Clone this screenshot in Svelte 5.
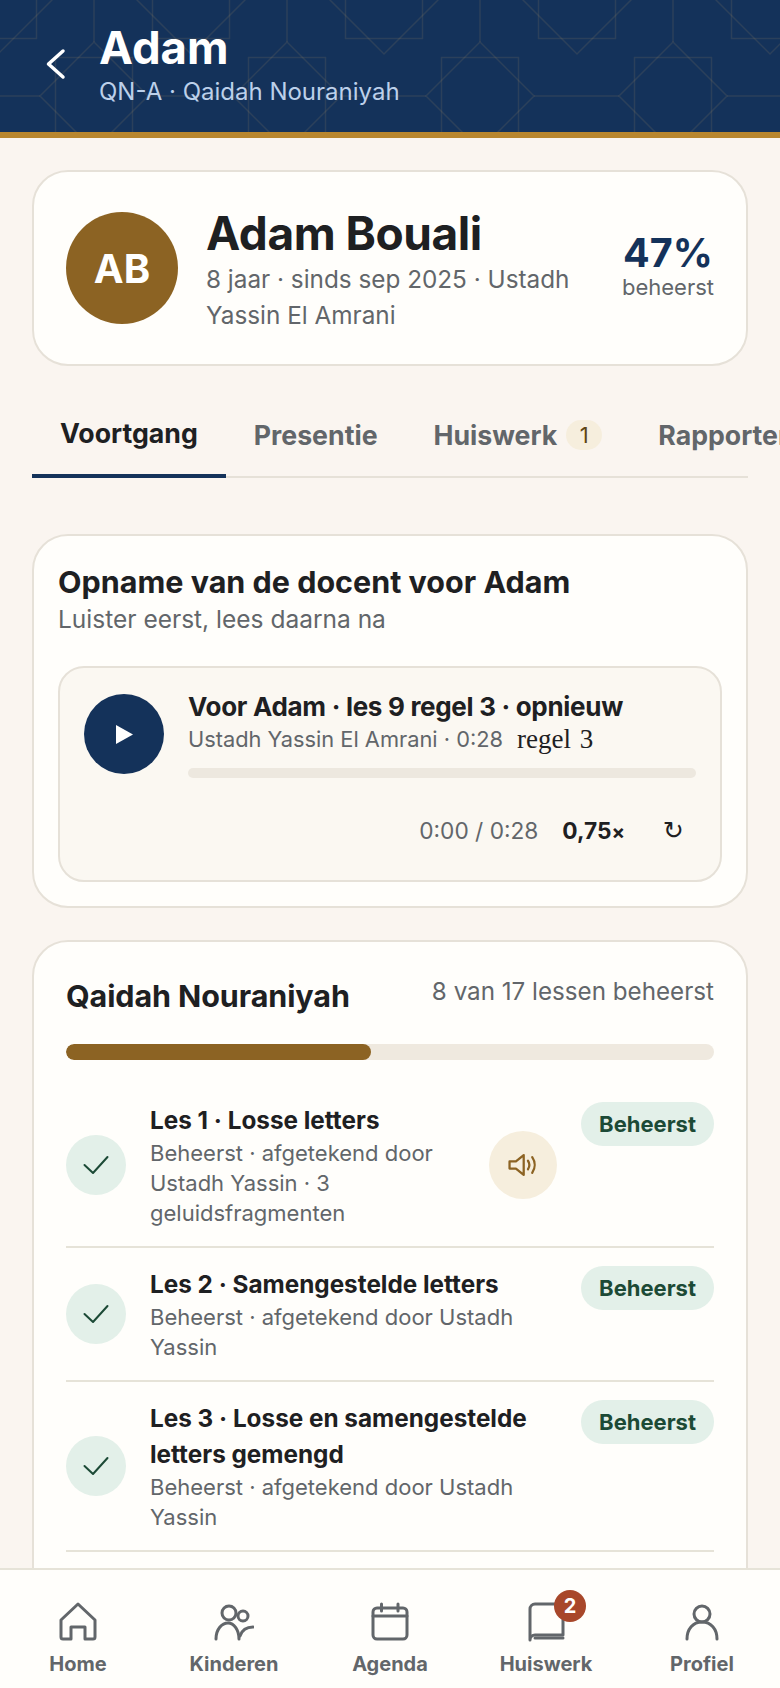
<script lang="ts">
	const tabs = [
		{ label: 'Voortgang', active: true },
		{ label: 'Presentie' },
		{ label: 'Huiswerk', count: 1 },
		{ label: 'Rapporten' }
	];

	const lessons = [
		{
			title: 'Les 1 · Losse letters',
			sub: 'Beheerst · afgetekend door Ustadh Yassin · 3 geluidsfragmenten',
			audio: true
		},
		{ title: 'Les 2 · Samengestelde letters', sub: 'Beheerst · afgetekend door Ustadh Yassin' },
		{
			title: 'Les 3 · Losse en samengestelde letters gemengd',
			sub: 'Beheerst · afgetekend door Ustadh Yassin'
		}
	];

	const navItems = ['Home', 'Kinderen', 'Agenda', 'Huiswerk', 'Profiel'];

	// header ornament: staggered rows, 193px apart
	const upperRow = [-2, 191, 384, 577, 770];
	const lowerRow = [94, 287, 480, 673];
</script>

<div class="screen">
	<header class="topbar">
		<svg class="pattern" width="780" height="132" aria-hidden="true">
			{#each upperRow as x}
				<rect x={x - 38.5} y="-38.500" width="77" height="77" />
				<path d="M{x} -54L{x + 54} 0L{x} 54L{x - 54} 0Z" />
			{/each}
			{#each lowerRow as x}
				<rect x={x - 38.5} y="57.500" width="77" height="77" />
				<path d="M{x} 42L{x + 54} 96L{x} 150L{x - 54} 96Z" />
				<path d="M{x} 0V42M{x + 54} 96H{x + 139}" />
			{/each}
			<path d="M0 96H40" />
		</svg>
		<svg class="back" width="22" height="32" viewBox="0 0 22 32" aria-hidden="true">
			<path d="M17 3L2.500 16L17 29" />
		</svg>
		<div class="topbar-text">
			<h1>Adam</h1>
			<p>QN-A · Qaidah Nouraniyah</p>
		</div>
	</header>

	<main class="content">
		<section class="card profile">
			<div class="avatar">AB</div>
			<div class="profile-info">
				<h2>Adam Bouali</h2>
				<p>8 jaar · sinds sep 2025 · Ustadh Yassin El Amrani</p>
			</div>
			<div class="mastery">
				<strong>47%</strong>
				<span>beheerst</span>
			</div>
		</section>

		<nav class="tabs">
			{#each tabs as tab}
				<div class="tab" class:active={tab.active}>
					{tab.label}
					{#if tab.count}<span class="tab-count">{tab.count}</span>{/if}
				</div>
			{/each}
		</nav>

		<section class="card recording">
			<h3>Opname van de docent voor Adam</h3>
			<p class="recording-sub">Luister eerst, lees daarna na</p>
			<div class="player">
				<div class="player-top">
					<div class="play">
						<svg width="20" height="20" viewBox="0 0 20 20" aria-hidden="true">
							<path d="M2 1L19 10.500L2 20Z" fill="#fff" />
						</svg>
					</div>
					<div class="player-info">
						<div class="player-title">Voor Adam · les 9 regel 3 · opnieuw</div>
						<div class="player-meta">
							<span>Ustadh Yassin El Amrani · 0:28</span>
							<span class="serif">regel 3</span>
						</div>
						<div class="player-track"></div>
					</div>
				</div>
				<div class="player-controls">
					<span class="time">0:00 / 0:28</span>
					<span class="speed">0,75<small>×</small></span>
					<span class="repeat">↻</span>
				</div>
			</div>
		</section>

		<section class="card course">
			<div class="course-head">
				<h3>Qaidah Nouraniyah</h3>
				<span>8 van 17 lessen beheerst</span>
			</div>
			<div class="progress"><div class="progress-fill" style="width: 47%"></div></div>
			{#each lessons as lesson}
				<div class="lesson">
					<div class="check">
						<svg width="28" height="28" viewBox="0 0 28 28" aria-hidden="true">
							<path d="M2.500 14L11 22L25.500 6" />
						</svg>
					</div>
					<div class="lesson-text">
						<div class="lesson-title">{lesson.title}</div>
						<div class="lesson-sub">{lesson.sub}</div>
					</div>
					{#if lesson.audio}
						<div class="audio">
							<svg width="34" height="34" viewBox="0 0 24 24" aria-hidden="true">
								<path d="M2.500 9.500H7L12.500 5V19L7 14.500H2.500Z" />
								<path d="M15.500 9C16.700 10.800 16.700 13.200 15.500 15" />
								<path d="M18.500 6.500C20.800 9.800 20.800 14.200 18.500 17.500" />
							</svg>
						</div>
					{/if}
					<span class="badge">Beheerst</span>
				</div>
			{/each}
		</section>
	</main>

	<nav class="bottom">
		{#each navItems as item}
			<div class="nav-item">
				<div class="nav-icon">
					{#if item === 'Home'}
						<svg width="40" height="40" viewBox="0 0 40 40" aria-hidden="true">
							<path d="M3 18L20 2L37 18V35A2 2 0 0 1 35 37H27V25H13V37H5A2 2 0 0 1 3 35Z" />
						</svg>
					{:else if item === 'Kinderen'}
						<svg width="40" height="40" viewBox="0 0 40 40" aria-hidden="true">
							<circle cx="15" cy="11" r="7" />
							<circle cx="29" cy="14" r="5" />
							<path d="M2 37C2 27 8 21 14 21C20 21 25 28 25 37" />
							<path d="M26 34C28 28 32 25 39 25" />
						</svg>
					{:else if item === 'Agenda'}
						<svg width="40" height="40" viewBox="0 0 40 40" aria-hidden="true">
							<rect x="3" y="6" width="34" height="31" rx="4" />
							<path d="M3 14H37M11.500 2V9M28 2V9" />
						</svg>
					{:else if item === 'Huiswerk'}
						<svg width="40" height="40" viewBox="0 0 40 40" aria-hidden="true">
							<path d="M4 38V7A5 5 0 0 1 9 2H37V33H9A5 5 0 0 0 4 38" />
							<path d="M9 36H37" />
						</svg>
						<span class="nav-badge">2</span>
					{:else}
						<svg width="40" height="40" viewBox="0 0 40 40" aria-hidden="true">
							<circle cx="20" cy="12" r="8" />
							<path d="M5 37C5 27 11 20 20 20C29 20 35 27 35 37" />
						</svg>
					{/if}
				</div>
				<span>{item}</span>
			</div>
		{/each}
	</nav>
</div>

<style>
	:global(body) {
		background: #faf5f0;
		font-family: Inter, 'Noto Sans', sans-serif;
	}
	.screen {
		display: flex;
		flex-direction: column;
		height: 1688px;
		overflow: hidden;
		color: #1e2022;
	}
	.topbar {
		position: relative;
		display: flex;
		align-items: flex-start;
		gap: 31px;
		flex: none;
		height: 132px;
		padding: 0 0 0 46px;
		background: #14325a;
		border-bottom: 6px solid #b8862e;
		overflow: hidden;
	}
	.pattern {
		position: absolute;
		inset: 0;
		fill: none;
		stroke: rgba(200, 165, 100, 0.13);
		stroke-width: 1.500;
	}
	.back {
		position: relative;
		margin-top: 48px;
		flex: none;
		fill: none;
		stroke: #fff;
		stroke-width: 3.500;
		stroke-linecap: round;
		stroke-linejoin: round;
	}
	.topbar-text {
		position: relative;
		margin-top: 23px;
	}
	.topbar h1 {
		margin: 0;
		font-size: 45.500px;
		line-height: 50px;
		font-weight: 700;
		color: #fff;
	}
	.topbar p {
		margin: 4px 0 0;
		font-size: 24px;
		line-height: 30px;
		color: #bcd0ea;
	}
	.content {
		flex: 1;
		min-height: 0;
		overflow: hidden;
		padding: 32px 32px 0;
	}
	.card {
		background: #fffefb;
		border: 2px solid #e6e1d8;
		border-radius: 36px;
	}
	.profile {
		display: flex;
		align-items: center;
		gap: 28px;
		height: 196px;
		padding: 0 32px;
		box-sizing: border-box;
	}
	.avatar {
		flex: none;
		width: 112px;
		height: 112px;
		border-radius: 50%;
		background: #8c6323;
		color: #fff;
		font-size: 40px;
		font-weight: 700;
		display: flex;
		align-items: center;
		justify-content: center;
	}
	.profile-info {
		flex: 1;
		min-width: 0;
	}
	.profile-info h2 {
		margin: 0 0 -1px;
		font-size: 46px;
		line-height: 58px;
		font-weight: 700;
		letter-spacing: -0.45px;
	}
	.profile-info p {
		margin: 0;
		font-size: 24.300px;
		line-height: 36px;
		color: #62666a;
	}
	.mastery {
		flex: none;
		display: flex;
		flex-direction: column;
		align-items: center;
		margin-bottom: 6px;
	}
	.mastery strong {
		font-size: 39.500px;
		line-height: 44px;
		color: #14325a;
	}
	.mastery span {
		font-size: 22px;
		line-height: 24px;
		color: #62666a;
	}
	.tabs {
		display: flex;
		height: 112px;
		margin: 0 0 56px;
		border-bottom: 2px solid #e6e1d8;
		box-sizing: border-box;
	}
	.tab {
		display: flex;
		align-items: center;
		gap: 9px;
		flex: none;
		height: 112px;
		padding: 26px 28px 0;
		font-size: 26.700px;
		font-weight: 700;
		color: #62666a;
		white-space: nowrap;
		box-sizing: border-box;
	}
	.tab.active {
		color: #1e2022;
		border-bottom: 4px solid #14325a;
	}
	.tab-count {
		display: flex;
		align-items: center;
		justify-content: center;
		width: 36px;
		height: 30px;
		border-radius: 15px;
		background: #f6eedd;
		color: #5f4514;
		font-size: 22px;
		font-weight: 400;
	}
	.recording {
		padding: 25px 24px 24px;
		margin-bottom: 32px;
	}
	.recording h3 {
		margin: 0;
		font-size: 30.500px;
		line-height: 42px;
		font-weight: 700;
	}
	.recording-sub {
		margin: -1px 0 30px;
		font-size: 24.500px;
		line-height: 34px;
		color: #62666a;
	}
	.player {
		background: #fbf8f2;
		border: 2px solid #e6e1d8;
		border-radius: 26px;
		padding: 26px 24px 36px;
	}
	.player-top {
		display: flex;
		gap: 24px;
	}
	.play {
		flex: none;
		width: 80px;
		height: 80px;
		border-radius: 50%;
		background: #14325a;
		display: flex;
		align-items: center;
		justify-content: center;
	}
	.player-info {
		flex: 1;
		min-width: 0;
		margin-top: -4px;
	}
	.player-title {
		font-size: 26px;
		line-height: 34px;
		font-weight: 700;
		letter-spacing: -0.3px;
	}
	.player-meta {
		display: flex;
		gap: 14px;
		font-size: 21.800px;
		line-height: 30px;
		color: #62666a;
	}
	.serif {
		font-family: 'Liberation Serif', serif;
		font-size: 27px;
		word-spacing: 2px;
		color: #1e2022;
	}
	.player-track {
		height: 10px;
		margin-top: 14px;
		border-radius: 5px;
		background: #ede8df;
	}
	.player-controls {
		display: flex;
		align-items: center;
		justify-content: flex-end;
		gap: 24px;
		height: 28px;
		margin-top: 38px;
		padding-right: 12px;
		font-size: 22.700px;
		color: #62666a;
	}
	.speed {
		font-weight: 700;
		color: #1e2022;
	}
	.speed small {
		font-size: 20px;
	}
	.repeat {
		margin-left: 14px;
		color: #1e2022;
		font-family: 'DejaVu Sans', sans-serif;
		font-size: 25px;
	}
	.course {
		padding: 33px 32px 60px;
	}
	.course-head {
		display: flex;
		justify-content: space-between;
		align-items: flex-start;
	}
	.course-head h3 {
		margin: 0;
		font-size: 30.500px;
		line-height: 42px;
		font-weight: 700;
		letter-spacing: -0.1px;
	}
	.course-head span {
		font-size: 24.200px;
		line-height: 34px;
		color: #62666a;
	}
	.progress {
		height: 16px;
		margin: 27px 0 24px;
		border-radius: 8px;
		background: #efe9df;
		overflow: hidden;
	}
	.progress-fill {
		height: 100%;
		border-radius: 8px;
		background: #8c6323;
	}
	.lesson {
		display: flex;
		align-items: center;
		gap: 24px;
		padding: 18px 0;
		border-bottom: 2px solid #e6e3d8;
	}
	.check {
		flex: none;
		width: 60px;
		height: 60px;
		border-radius: 50%;
		background: #e3f0e9;
		display: flex;
		align-items: center;
		justify-content: center;
	}
	.check svg {
		fill: none;
		stroke: #1c4a36;
		stroke-width: 2;
		stroke-linecap: round;
		stroke-linejoin: round;
	}
	.lesson-text {
		flex: 1;
		min-width: 0;
	}
	.lesson-title {
		font-size: 24.300px;
		line-height: 36px;
		font-weight: 700;
	}
	.lesson-sub {
		font-size: 22px;
		line-height: 30px;
		color: #62666a;
	}
	.audio {
		flex: none;
		width: 68px;
		height: 68px;
		border-radius: 50%;
		background: #f6eedd;
		display: flex;
		align-items: center;
		justify-content: center;
	}
	.audio svg {
		fill: none;
		stroke: #8c6323;
		stroke-width: 1.600;
		stroke-linejoin: round;
		stroke-linecap: round;
	}
	.badge {
		align-self: flex-start;
		flex: none;
		padding: 0 18px;
		height: 44px;
		line-height: 44px;
		border-radius: 22px;
		background: #e3f0e9;
		color: #1c4a36;
		font-size: 22px;
		font-weight: 700;
	}
	.bottom {
		flex: none;
		display: grid;
		grid-template-columns: repeat(5, 1fr);
		height: 120px;
		box-sizing: border-box;
		padding-top: 32px;
		background: #fffefb;
		border-top: 2px solid #e6e3d8;
	}
	.nav-item {
		display: flex;
		flex-direction: column;
		align-items: center;
		gap: 10px;
		font-size: 20px;
		font-weight: 700;
		color: #62666a;
	}
	.nav-icon {
		position: relative;
		width: 40px;
		height: 40px;
	}
	.nav-icon svg {
		fill: none;
		stroke: #62666a;
		stroke-width: 3;
		stroke-linecap: round;
		stroke-linejoin: round;
	}
	.nav-badge {
		position: absolute;
		top: -12px;
		right: -20px;
		width: 32px;
		height: 32px;
		border-radius: 50%;
		background: #a8472a;
		color: #fff;
		font-size: 20px;
		line-height: 32px;
		text-align: center;
	}
</style>
